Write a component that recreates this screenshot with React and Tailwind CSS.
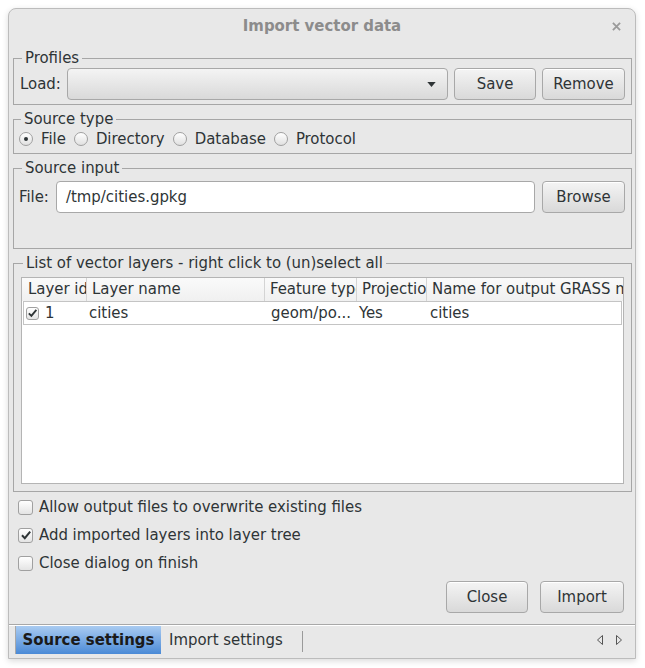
import { useState } from 'react';

const font = "font-['DejaVu_Sans_Condensed','DejaVu_Sans',sans-serif] font-stretch-condensed";

const GroupBox = ({ title, className = '', children }) => (
    <fieldset className={`min-w-0 border border-[#a6a6a6] px-[6px] ${className}`}>
        <legend className="ml-[2px] px-[3px] leading-[20px] text-[#2e3436]">{title}</legend>
        {children}
    </fieldset>
);

const Button = ({ children, className = '' }) => (
    <button className={`h-[32px] rounded-[4px] border border-[#a8a8a8] bg-gradient-to-b from-[#f4f4f4] to-[#d9d9d9] text-[#2e3436] shadow-[inset_0_1px_0_#fff] ${className}`}>
        {children}
    </button>
);

const Radio = ({ checked, label }) => (
    <label className="flex items-center gap-[8px]">
        <span className="flex h-[14px] w-[14px] items-center justify-center rounded-full border border-[#a0a0a0] bg-gradient-to-b from-[#ffffff] to-[#e0e0e0]">
            {checked && <span className="h-[4px] w-[4px] rounded-full bg-[#2e3436]" />}
        </span>
        <span>{label}</span>
    </label>
);

const Check = ({ checked, size = 'h-[15px] w-[15px]' }) => (
    <span className={`flex shrink-0 items-center justify-center rounded-[3px] border border-[#a0a0a0] bg-gradient-to-b from-[#ffffff] to-[#e4e4e4] ${size}`}>
        {checked && (
            <svg viewBox="0 0 12 12" className="h-[12px] w-[12px]">
                <path d="M2 6.3 L4.8 9.2 L10.2 2.6" fill="none" stroke="#2e3436" strokeWidth="2" />
            </svg>
        )}
    </span>
);

const CheckRow = ({ checked, label }) => (
    <label className="flex h-[28px] items-center gap-[6px] pl-[9px]">
        <Check checked={checked} />
        <span>{label}</span>
    </label>
);

const columns = [
    { name: 'Layer id', w: 'w-[65px]' },
    { name: 'Layer name', w: 'w-[178px]' },
    { name: 'Feature type', w: 'w-[92px]' },
    { name: 'Projection', w: 'w-[70px]' },
    { name: 'Name for output GRASS map', w: 'min-w-0 flex-1' },
];

const App = () => {
    const [source, setSource] = useState('File');

    return (
        <div className={`h-[668px] w-[645px] bg-white pl-[8px] pt-[8px] text-[16.6px] text-[#2e3436] ${font}`}>
            <div className="flex h-[651px] w-[628px] flex-col rounded-t-[8px] border border-[#bcbcbc] bg-[#e8e8e8] shadow-[0_2px_6px_rgba(0,0,0,0.15)]">
                {/* title bar */}
                <div className="relative flex h-[39px] items-center justify-center pb-[5px]">
                    <span className="font-bold text-[#8c8c8c]">Import vector data</span>
                    <svg viewBox="0 0 10 10" className="absolute right-[14px] top-[13px] h-[9px] w-[9px]">
                        <path d="M1 1 L9 9 M9 1 L1 9" stroke="#9a9a9a" strokeWidth="2" />
                    </svg>
                </div>

                <div className="flex flex-col gap-[4px] pl-[4px] pr-[3px]">
                    <GroupBox title="Profiles" className="pb-[4px]">
                        <div className="flex h-[32px] items-center">
                            <span className="mr-[6px]">Load:</span>
                            <div className="flex h-[32px] flex-1 items-center justify-end rounded-[4px] border border-[#a8a8a8] bg-gradient-to-b from-[#f4f4f4] to-[#d9d9d9] pr-[11px]">
                                <svg viewBox="0 0 10 6" className="h-[5px] w-[9px]">
                                    <path d="M0 0 L10 0 L5 6 Z" fill="#2e3436" />
                                </svg>
                            </div>
                            <Button className="ml-[6px] w-[82px]">Save</Button>
                            <Button className="ml-[6px] w-[83px]">Remove</Button>
                        </div>
                    </GroupBox>

                    <GroupBox title="Source type" className="pb-[4px] pl-[5px]">
                        <div className="flex h-[20px] items-center gap-[8px]">
                            {['File', 'Directory', 'Database', 'Protocol'].map((s) => (
                                <div key={s} onClick={() => setSource(s)}>
                                    <Radio checked={source === s} label={s} />
                                </div>
                            ))}
                        </div>
                    </GroupBox>

                    <GroupBox title="Source input" className="h-[91px] pt-[3px]">
                        <div className="flex h-[32px] items-center">
                            <span className="mr-[7px] ml-[-1px]">File:</span>
                            <div className="flex h-[32px] flex-1 items-center rounded-[4px] border border-[#a8a8a8] bg-white pl-[9px]">
                                /tmp/cities.gpkg
                            </div>
                            <Button className="ml-[7px] w-[83px]">Browse</Button>
                        </div>
                    </GroupBox>

                    <GroupBox title="List of vector layers - right click to (un)select all" className="h-[239px] pt-[4px] pl-[7px] pr-[7px]">
                        <div className="h-[207px] overflow-hidden border border-[#b4b4b4] bg-white">
                            <div className="flex h-[23px] items-center bg-gradient-to-b from-[#fafafa] to-[#f0f0f0]">
                                {columns.map((c, i) => (
                                    <div
                                        key={c.name}
                                        className={`h-full overflow-hidden whitespace-nowrap leading-[22px] ${c.w} ${i === 0 ? 'pl-[6px]' : 'pl-[5px]'} ${i < 4 ? 'border-r border-[#d4d4d4]' : ''}`}
                                    >
                                        {c.name}
                                    </div>
                                ))}
                            </div>
                            <div className="mx-[1px] flex h-[24px] items-center border border-[#c4c4c4]">
                                <div className="flex w-[64px] items-center gap-[6px] pl-[2px]">
                                    <Check checked size="h-[13px] w-[13px]" />
                                    <span>1</span>
                                </div>
                                <div className="w-[178px] pl-[1px]">cities</div>
                                <div className="w-[92px] pl-[5px]">geom/po...</div>
                                <div className="w-[70px] pl-[1px]">Yes</div>
                                <div className="flex-1 pl-[2px]">cities</div>
                            </div>
                        </div>
                    </GroupBox>
                </div>

                <div className="mt-[1px] flex flex-col">
                    <CheckRow label="Allow output files to overwrite existing files" />
                    <CheckRow checked label="Add imported layers into layer tree" />
                    <CheckRow label="Close dialog on finish" />
                </div>

                <div className="mt-[4px] flex justify-end gap-[12px] pr-[11px]">
                    <Button className="w-[82px]">Close</Button>
                    <Button className="w-[84px]">Import</Button>
                </div>

                {/* tab bar */}
                <div className="mt-[11px] flex h-[30px] items-stretch border-t border-[#a8a8a8] pl-[6px] pt-[1px] shadow-[inset_0_1px_0_#fff]">
                    <div className="flex h-[28px] w-[146px] items-center justify-center border-l border-[#a8a8a8] bg-gradient-to-b from-[#a9cbf1] to-[#4a8ad6] font-bold text-[#1a1a1a]">
                        Source settings
                    </div>
                    <div className="flex h-[28px] items-center pl-[8px]">Import settings</div>
                    <div className="ml-[19px] mt-[5px] h-[21px] w-px bg-[#9a9a9a]" />
                    <div className="ml-auto flex items-center gap-[13px] pr-[13px]">
                        <svg viewBox="0 0 6 10" className="h-[10px] w-[6px]">
                            <path d="M5.5 0.5 L0.5 5 L5.5 9.5 Z" fill="none" stroke="#555" />
                        </svg>
                        <svg viewBox="0 0 6 10" className="h-[10px] w-[6px]">
                            <path d="M0.5 0.5 L5.5 5 L0.5 9.5 Z" fill="none" stroke="#555" />
                        </svg>
                    </div>
                </div>
            </div>
        </div>
    );
};

export default App;
